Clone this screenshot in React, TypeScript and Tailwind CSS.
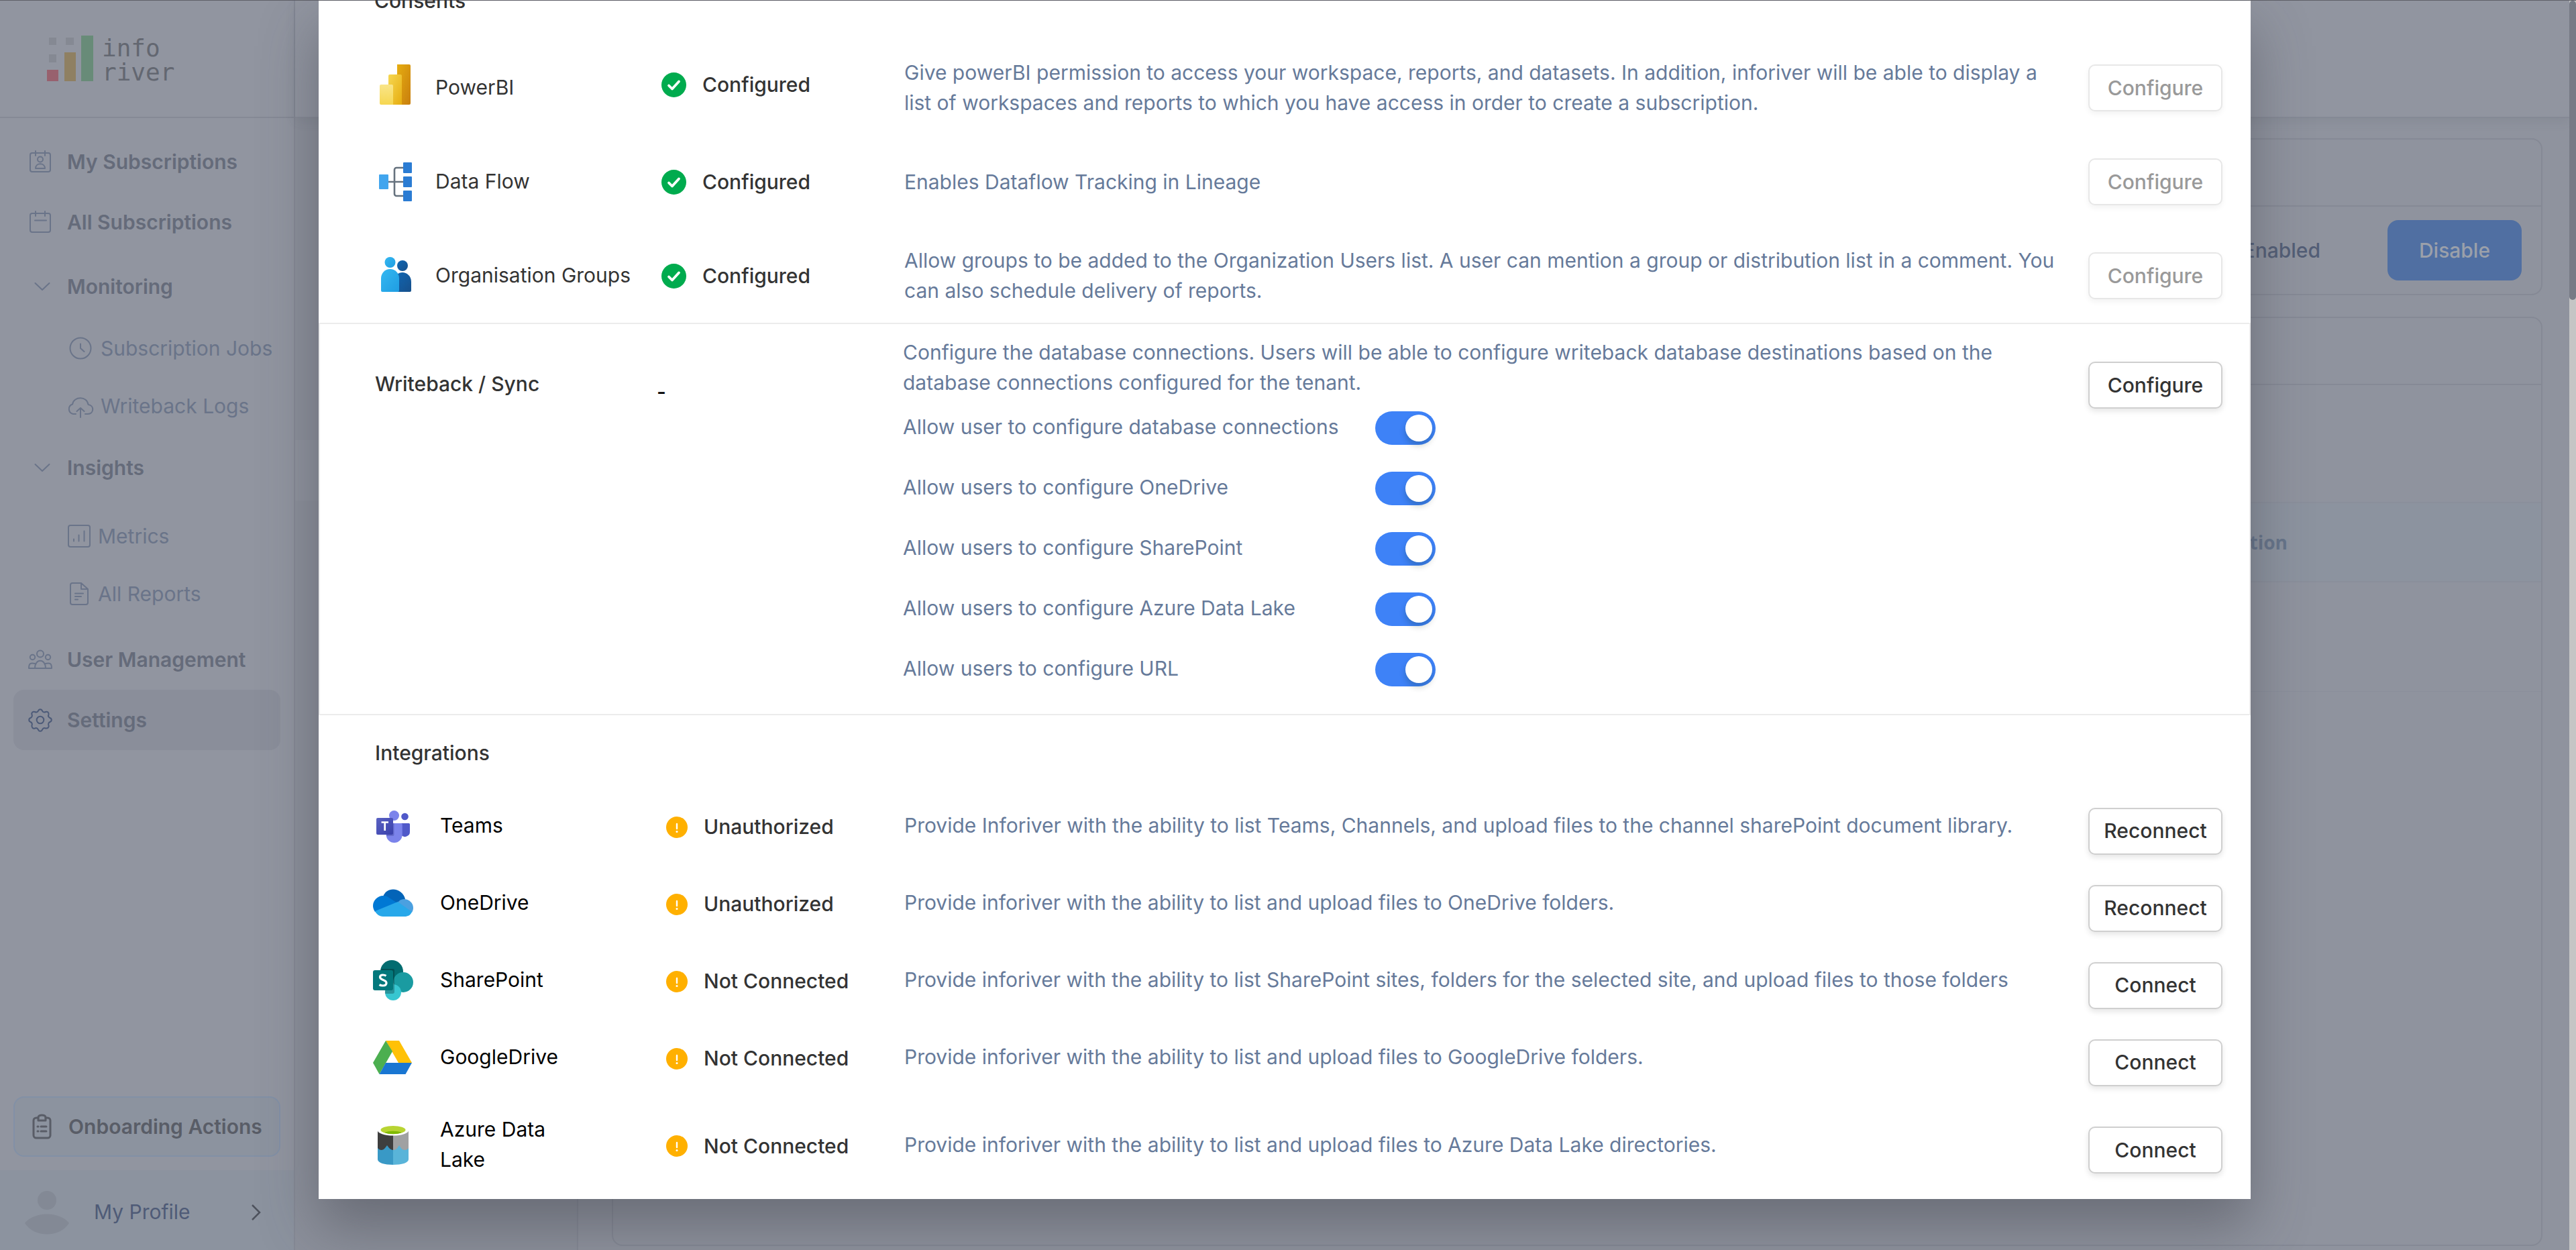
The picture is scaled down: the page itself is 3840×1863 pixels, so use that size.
import React from "react";

type RowData = { name: string; icon: React.ReactNode; status: string; text: string; action: string };

/* ---------- product icons ---------- */

const PowerBIIcon = () => (
  <svg viewBox="0 0 60 60" className="size-15" aria-hidden="true">
    <defs>
      <linearGradient id="pb1" x1="0" y1="0" x2="1" y2="1"><stop offset="0" stopColor="#e6ad10" /><stop offset="1" stopColor="#c87e0e" /></linearGradient>
      <linearGradient id="pb2" x1="0" y1="0" x2="1" y2="1"><stop offset="0" stopColor="#f6d751" /><stop offset="1" stopColor="#e6ad10" /></linearGradient>
      <linearGradient id="pb3" x1="0" y1="0" x2="0" y2="1"><stop offset="0" stopColor="#f9e589" /><stop offset="1" stopColor="#f6d751" /></linearGradient>
    </defs>
    <path d="M32 0h18a2 2 0 0 1 2 2v56a2 2 0 0 1-2 2H32z" fill="url(#pb1)" />
    <path d="M19 17a2 2 0 0 1 2-2h16a2 2 0 0 1 2 2v43H19z" fill="url(#pb2)" />
    <path d="M6 32a2 2 0 0 1 2-2h16a2 2 0 0 1 2 2v28H8a2 2 0 0 1-2-2z" fill="url(#pb3)" />
  </svg>
);

const DataFlowIcon = () => (
  <svg viewBox="0 0 60 60" className="size-15" aria-hidden="true">
    <path d="M18 30h24M42 9H31a3 3 0 0 0-3 3v36a3 3 0 0 0 3 3h11" fill="none" stroke="#66727e" strokeWidth="2.6" />
    <rect x="5" y="19" width="14" height="22" rx="1" fill="#41a5ee" />
    <rect x="41" y="1" width="13" height="16" rx="1" fill="#2b7cd3" />
    <rect x="41" y="22" width="13" height="16" rx="1" fill="#2b7cd3" />
    <rect x="41" y="43" width="13" height="16" rx="1" fill="#2b7cd3" />
  </svg>
);

const GroupsIcon = () => (
  <svg viewBox="0 0 60 60" className="size-15" aria-hidden="true">
    <defs>
      <linearGradient id="g1" x1="0" y1="0" x2="1" y2="1"><stop offset="0" stopColor="#35b8f1" /><stop offset="1" stopColor="#1f9de2" /></linearGradient>
      <linearGradient id="g2" x1="0" y1="0" x2="1" y2="1"><stop offset="0" stopColor="#0f67b4" /><stop offset="1" stopColor="#17508b" /></linearGradient>
    </defs>
    <circle cx="40" cy="15" r="8" fill="url(#g2)" />
    <path d="M28 54V36c0-7 6-11 12-11s13 5 13 14v13a2 2 0 0 1-2 2z" fill="url(#g2)" />
    <circle cx="21.500" cy="10" r="8" fill="url(#g1)" />
    <path d="M8 34c0-8 6-14 13.500-14S35 26 35 34v18a2 2 0 0 1-2 2H10a2 2 0 0 1-2-2z" fill="url(#g1)" />
  </svg>
);

const TeamsIcon = () => (
  <svg viewBox="0 0 60 60" className="size-15" aria-hidden="true">
    <defs><linearGradient id="t1" x1="0" y1="0" x2="1" y2="1"><stop offset="0" stopColor="#5a62c3" /><stop offset="1" stopColor="#3940ab" /></linearGradient></defs>
    <circle cx="47.500" cy="16" r="5.300" fill="#5059c9" />
    <path d="M38 26h15.500A1.500 1.500 0 0 1 55 27.500v10.500a7.500 7.500 0 0 1-13.500 5z" fill="#5059c9" />
    <circle cx="31.500" cy="14.500" r="7.500" fill="#7b83eb" />
    <path d="M20 26h22a1.700 1.700 0 0 1 1.700 1.700V43a12 12 0 0 1-24 0z" fill="#7b83eb" />
    <path d="M20 26h11.500v16.500A2.500 2.500 0 0 1 29 45H20z" fill="#4b52ab" opacity=".5" />
    <rect x="5" y="18" width="25" height="25" rx="2" fill="url(#t1)" />
    <path d="M12.500 24.500h10.500M17.700 24.500v12.500" stroke="#fff" strokeWidth="2.700" />
  </svg>
);

const OneDriveIcon = () => (
  <svg viewBox="0 0 60 60" className="size-15" aria-hidden="true">
    <path d="M15 20C18 13 23 9.500 30 9.500c8 0 16 5.500 18 14.500L38 33z" fill="#0364b8" />
    <path d="M15 19c4 0 7 1 9 3l14 9-9 10L3 43c-2-3-3-6-3-9 0-8 7-15 15-15z" fill="#0078d4" />
    <path d="M46 24c8 0 14 6 14 13 0 3-1 5-2 7L36 30c3-4 6-6 10-6z" fill="#4ba0e0" />
    <path d="M37 28l21 15c-2 5-6 7-11 7H15C9 50 5 46 3 42z" fill="#28a8ea" />
  </svg>
);

const SharePointIcon = () => (
  <svg viewBox="0 0 60 60" className="size-15" aria-hidden="true">
    <circle cx="28" cy="17" r="17" fill="#036c70" />
    <circle cx="45" cy="33" r="15" fill="#1a9ba1" />
    <circle cx="30" cy="48" r="12" fill="#37c6d0" />
    <path d="M12 13h18a2 2 0 0 1 2 2v32a3 3 0 0 1-3 3H18a12 12 0 0 1 0-4z" fill="#000" opacity=".25" />
    <rect x="0" y="15" width="30" height="30" rx="3" fill="#03787c" />
    <path d="M19.500 23.300c-1.500-1-3-1.300-4.700-1.300-2.600 0-4.300 1.300-4.300 3.300 0 5 9.500 3.200 9.500 8.700 0 2.600-2.300 4-5.300 4-1.900 0-3.700-.4-5.200-1.400" fill="none" stroke="#fff" strokeWidth="3.200" />
  </svg>
);

const GoogleDriveIcon = () => (
  <svg viewBox="0 0 60 60" className="size-15" aria-hidden="true">
    <path d="M19 5h20l19 33H38z" fill="#ffc107" />
    <path d="M19 5 0 38l9.500 17L29 21z" fill="#4caf50" />
    <path d="M19 38h39l-9.500 17h-39z" fill="#1976d2" />
  </svg>
);

const DataLakeIcon = () => (
  <svg viewBox="0 0 60 60" className="size-15" aria-hidden="true">
    <path d="M7 9h23v40H7z" fill="#3e3e3e" />
    <path d="M30 9h23v40H30z" fill="#a0a1a2" />
    <path d="M7 35c3 4 8 4 11 0l3-4 3 4c2 2 4 3 6 3v22C17 60 7 57 7 52z" fill="#3999c6" />
    <path d="M30 38c3 0 5-1 7-4l2-3 2 3c3 5 9 5 12 1v17c0 5-10 8-23 8z" fill="#59b4d9" />
    <ellipse cx="30" cy="9" rx="23" ry="7.500" fill="#fff" />
    <ellipse cx="30" cy="8" rx="18.500" ry="6" fill="#b8d432" />
    <path d="M17 12c7-3 19-3 26 0-7 3-19 3-26 0z" fill="#7fba00" />
  </svg>
);

/* ---------- status icons ---------- */

const OkIcon = () => (
  <svg viewBox="0 0 37 37" className="size-[37px] shrink-0" aria-hidden="true">
    <circle cx="18.500" cy="18.500" r="18.500" fill="#00ab4e" />
    <path d="m11 19.500 5 5L26 13.500" fill="none" stroke="#fff" strokeWidth="3.800" strokeLinecap="round" strokeLinejoin="round" />
  </svg>
);

const WarnIcon = () => (
  <svg viewBox="0 0 32 32" className="size-8 shrink-0" aria-hidden="true">
    <circle cx="16" cy="16" r="16" fill="#ffb000" />
    <path d="M16 11v7" stroke="#fff" strokeWidth="2.400" strokeLinecap="round" />
    <circle cx="16" cy="22.500" r="1.500" fill="#fff" />
  </svg>
);

/* ---------- sidebar icons ---------- */

const Line = ({ children, className = "text-[#6a7489]" }: { children: React.ReactNode; className?: string }) => (
  <svg viewBox="0 0 40 40" className={`size-10 shrink-0 ${className}`} fill="none" stroke="currentColor" strokeWidth="2" strokeLinecap="round" strokeLinejoin="round" aria-hidden="true">
    {children}
  </svg>
);

const MySubsIcon = () => (
  <Line>
    <rect x="5" y="7" width="30" height="28" rx="3" />
    <path d="M13 4v7M27 4v7" />
    <circle cx="20" cy="16.500" r="4" />
    <path d="M13 30c0-9 14-9 14 0z" />
  </Line>
);
const AllSubsIcon = () => (
  <Line>
    <rect x="5" y="7" width="30" height="28" rx="3" />
    <path d="M13 4v7M27 4v7M12 17.500h17" />
  </Line>
);
const ChevronIcon = () => <Line><path d="m12.500 15 10.500 10 10.500-10" /></Line>;
const ClockIcon = () => <Line><circle cx="20" cy="20" r="15.500" /><path d="M20 13.500V20l5.500 5" /></Line>;
const CloudIcon = () => (
  <Line>
    <path d="M13 32H9A7.500 7.500 0 0 1 8 17.500C10 5 30 5 31.500 18 41 19 40 32 31 32h-4M20 37V23M14.500 28l5.500-5 5.500 5" />
  </Line>
);
const MetricsIcon = () => <Line><rect x="2" y="4" width="32" height="32" rx="3" /><path d="M10 27.500V24.500M17.500 27.500v-9M25.500 27.500v-15" /></Line>;
const ReportsIcon = () => (
  <Line>
    <path d="M21 4H8a3 3 0 0 0-3 3v26a3 3 0 0 0 3 3h20a3 3 0 0 0 3-3V13zM21 4v9h10M12 19.500h12M12 24h9M12 28.500h4" />
  </Line>
);
const UsersIcon = () => (
  <Line>
    <circle cx="20" cy="11.500" r="5" />
    <circle cx="8.500" cy="16.500" r="3.700" />
    <circle cx="31.500" cy="16.500" r="3.700" />
    <path d="M12 33c0-15 16-15 16 0zM12 33H3c0-8 3-8 9-7M28 33h9c0-8-3-8-9-7" />
  </Line>
);
const GearIcon = () => (
  <Line className="text-[#4c5a78]">
    <circle cx="20" cy="20" r="5.300" />
    <path d="M17 6.500c1-3 5-3 6 0 1 2 3 2.500 5 1.500 3-1 5 1 4.500 4-1 2 0 4 2 5 3 1 3 5 0 6-2 1-3 3-2 5 1 3-1.500 5-4.500 4.500-2-1-4 0-5 2-1 3-5 3-6 0-1-2-3-3-5-2-3 1-5-1.500-4.500-4.500 1-2 0-4-2-5-3-1-3-5 0-6 2-1 3-3 2-5-1-3 1.500-5 4.500-4 2 1 4 .5 5-1.500z" />
  </Line>
);

const Logo = () => (
  <div className="flex h-44 items-center border-b-2 border-[#858995] pl-[70px]" role="img" aria-label="Inforiver">
    <svg viewBox="0 0 70 70" className="size-[70px]" aria-hidden="true">
      <g fill="#858993">
        <rect x="3" y="4" width="11" height="11" />
        <rect x="28" y="4" width="12" height="11" />
        <rect x="3" y="29" width="11" height="12" />
      </g>
      <rect x="0" y="52" width="17" height="17" fill="#98616e" />
      <rect x="26" y="26" width="17" height="43" fill="#8f8062" />
      <rect x="51" y="1" width="18" height="68" fill="#688b78" />
    </svg>
    <div className="flex flex-col pt-1.5 pl-3 font-['DejaVu_Sans_Mono',monospace] text-[36px] leading-9 text-[#636771]">
      <span>info</span>
      <span>river</span>
    </div>
  </div>
);

/* ---------- sidebar ---------- */

const NavItem = ({ icon, label, className = "" }: { icon: React.ReactNode; label: string; className?: string }) => (
  <a href="#" className={`flex h-[90px] items-center gap-5 rounded-2xl pl-5 font-semibold whitespace-nowrap text-[#656b7a] ${className}`}>
    {icon}
    <span>{label}</span>
  </a>
);

const SubItem = ({ icon, label, className = "gap-2.5" }: { icon: React.ReactNode; label: string; className?: string }) => (
  <a href="#" className={`flex h-[86px] items-center pl-20 whitespace-nowrap text-[#6a7489] ${className}`}>
    {icon}
    <span>{label}</span>
  </a>
);

const Sidebar = () => (
  <aside className="flex w-[440px] shrink-0 flex-col border-r-2 border-[#858995] bg-[#9195a0]">
    <Logo />
    <nav className="flex flex-1 flex-col px-5 pt-5 text-[30px]">
      <NavItem icon={<MySubsIcon />} label="My Subscriptions" />
      <NavItem icon={<AllSubsIcon />} label="All Subscriptions" />
      <NavItem icon={<ChevronIcon />} label="Monitoring" className="mt-1.5" />
      <SubItem icon={<ClockIcon />} label="Subscription Jobs" className="mt-1 gap-2.5" />
      <SubItem icon={<CloudIcon />} label="Writeback Logs" />
      <NavItem icon={<ChevronIcon />} label="Insights" className="mt-1" />
      <SubItem icon={<MetricsIcon />} label="Metrics" className="mt-3.5 gap-1.5" />
      <SubItem icon={<ReportsIcon />} label="All Reports" className="gap-1.5" />
      <NavItem icon={<UsersIcon />} label="User Management" className="mt-2.5" />
      <NavItem icon={<GearIcon />} label="Settings" className="bg-[#8a8e9a]" />
    </nav>
    <button type="button" className="mx-5 mb-5 flex h-[90px] items-center gap-5 rounded-2xl border-2 border-[#8290a6] bg-[#8c939f] pl-5 text-[30px] font-semibold whitespace-nowrap text-[#595d67]">
      <Line className="text-[#595d67]">
        <path d="M15 7h-3a4 4 0 0 0-4 4v22a4 4 0 0 0 4 4h17a4 4 0 0 0 4-4V11a4 4 0 0 0-4-4h-3" strokeWidth="3" />
        <path d="M15 6c1-4 10-4 11 0v5H15zM14 20h1M19 20h8M14 27h1M19 27h8" strokeWidth="3" />
      </Line>
      <span>Onboarding Actions</span>
    </button>
    <button type="button" className="flex h-[119px] items-center bg-[#8c939f] pt-1.5 pl-9 text-left text-[30px] text-[#4f5b77]">
      <svg viewBox="0 0 68 68" className="size-[68px]" fill="#838995" aria-hidden="true">
        <circle cx="34" cy="16" r="14" />
        <path d="M1 50c14-18 52-18 66 0-14 22-52 22-66 0z" />
      </svg>
      <span className="flex-1 pl-9">My Profile</span>
      <svg viewBox="0 0 16 26" className="mr-12 h-[26px] w-4" fill="none" stroke="#4e525d" strokeWidth="2.500" aria-hidden="true">
        <path d="m2 2 11 11L2 24" />
      </svg>
    </button>
  </aside>
);

/* ---------- page behind the dialog ---------- */

const Page = () => (
  <div className="flex min-w-0 flex-1 flex-col bg-[#8f939e]">
    <header className="z-10 h-44 border-b-2 border-[#858995] bg-[#9195a0] shadow-[0_6px_14px_rgba(70,75,90,0.10)]" />
    <div className="flex flex-1">
      <div className="w-[422px] border-r-2 border-[#858995] bg-[#8c909b] pt-[480px]">
        <div className="h-[90px] bg-[#8f939e]" />
      </div>
      <main className="flex flex-1 flex-col gap-8 pt-[30px] pr-10 pb-1.5 pl-[50px] text-[30px]">
        <section className="rounded-2xl border-2 border-[#858995]">
          <div className="h-[100px] border-b-2 border-[#858995]" />
          <div className="flex h-[130px] items-center justify-end gap-[100px] pr-[29px]">
            <span className="font-medium text-[#535e76]">Enabled</span>
            <button type="button" className="h-[90px] w-[200px] rounded-2xl bg-[#506fa2] font-medium text-[#9ba0aa]">Disable</button>
          </div>
        </section>
        <section className="flex-1 rounded-2xl border-2 border-[#858995]">
          <div className="h-[100px] border-b-2 border-[#858995]" />
          <div className="h-[174px]" />
          <table className="w-full">
            <thead>
              <tr className="h-[118px] border-y-2 border-[#8a8f9b] bg-[#8c939f]">
                <th className="pr-[378px] text-right font-['Open_Sans',sans-serif] text-[28px] font-bold text-[#66748a]">Action</th>
              </tr>
            </thead>
            <tbody>
              <tr className="h-[163px] border-b border-[#8a8f9b]"><td /></tr>
            </tbody>
          </table>
        </section>
      </main>
    </div>
  </div>
);

/* ---------- dialog ---------- */

const consents: RowData[] = [
  { name: "PowerBI", icon: <PowerBIIcon />, status: "Configured", text: "Give powerBI permission to access your workspace, reports, and datasets. In addition, inforiver will be able to display a list of workspaces and reports to which you have access in order to create a subscription.", action: "Configure" },
  { name: "Data Flow", icon: <DataFlowIcon />, status: "Configured", text: "Enables Dataflow Tracking in Lineage", action: "Configure" },
  { name: "Organisation Groups", icon: <GroupsIcon />, status: "Configured", text: "Allow groups to be added to the Organization Users list. A user can mention a group or distribution list in a comment. You can also schedule delivery of reports.", action: "Configure" },
];

const toggles = [
  "Allow user to configure database connections",
  "Allow users to configure OneDrive",
  "Allow users to configure SharePoint",
  "Allow users to configure Azure Data Lake",
  "Allow users to configure URL",
];

const integrations: RowData[] = [
  { name: "Teams", icon: <TeamsIcon />, status: "Unauthorized", text: "Provide Inforiver with the ability to list Teams, Channels, and upload files to the channel sharePoint document library.", action: "Reconnect" },
  { name: "OneDrive", icon: <OneDriveIcon />, status: "Unauthorized", text: "Provide inforiver with the ability to list and upload files to OneDrive folders.", action: "Reconnect" },
  { name: "SharePoint", icon: <SharePointIcon />, status: "Not Connected", text: "Provide inforiver with the ability to list SharePoint sites, folders for the selected site, and upload files to those folders", action: "Connect" },
  { name: "GoogleDrive", icon: <GoogleDriveIcon />, status: "Not Connected", text: "Provide inforiver with the ability to list and upload files to GoogleDrive folders.", action: "Connect" },
  { name: "Azure Data Lake", icon: <DataLakeIcon />, status: "Not Connected", text: "Provide inforiver with the ability to list and upload files to Azure Data Lake directories.", action: "Connect" },
];

const ActionButton = ({ label, disabled = false }: { label: string; disabled?: boolean }) => (
  <button
    type="button"
    disabled={disabled}
    className="h-[70px] w-[200px] rounded-[10px] border-2 border-[#cfcfcf] bg-white font-medium text-[#333] shadow-[0_4px_8px_rgba(0,0,0,0.10)] disabled:border-[#e7e7e7] disabled:text-[#999] disabled:shadow-[0_4px_8px_rgba(0,0,0,0.05)]"
  >
    {label}
  </button>
);

const Toggle = ({ label }: { label: string }) => (
  <label className="flex h-[90px] items-center">
    <span className="w-[704px] pb-1">{label}</span>
    <input
      type="checkbox"
      role="switch"
      defaultChecked
      className="flex h-[50px] w-[90px] appearance-none items-center rounded-full bg-gray-300 px-[5px] before:size-10 before:rounded-full before:bg-white before:shadow-[0_6px_10px_rgba(0,35,11,0.2)] checked:justify-end checked:bg-[#3e82f7]"
    />
  </label>
);

const Dialog = () => (
  <div role="dialog" aria-label="Connections" className="w-[2880px] bg-white text-[30px] leading-[45px] text-[#333] shadow-[0_40px_80px_rgba(60,62,72,0.45)]">
    <h2 className="-mt-[22px] h-[82px] pl-[83px] font-medium">Consents</h2>
    {consents.map((r) => (
      <div key={r.name} className="group grid h-[140px] grid-cols-[89px_337px_362px_1fr_200px] items-center pr-[42px] pl-[85px]">
        <span className="group-first-of-type:pb-2.5">{r.icon}</span>
        <span className="pb-0.5">{r.name}</span>
        <span className="flex items-center gap-6 font-medium group-first-of-type:pb-2.5"><OkIcon />{r.status}</span>
        <p className="pr-12 text-[#667a9a]">{r.text}</p>
        <ActionButton label={r.action} disabled />
      </div>
    ))}
    <section className="grid grid-cols-[420px_367px_1fr_200px] border-2 border-[#ececec] pt-5 pr-10 pb-[21px] pl-[82px]">
      <h2 className="pt-[47px] font-medium">Writeback / Sync</h2>
      <span className="pt-[59px] font-medium text-black">-</span>
      <div className="pr-12 text-[#667a9a]">
        <p>Configure the database connections. Users will be able to configure writeback database destinations based on the database connections configured for the tenant.</p>
        {toggles.map((t) => (
          <Toggle key={t} label={t} />
        ))}
      </div>
      <div className="pt-9"><ActionButton label="Configure" /></div>
    </section>
    <section className="pb-2">
      <h2 className="h-[107px] pt-[34px] pl-[84px] font-medium">Integrations</h2>
      {integrations.map((r) => (
        <div key={r.name} className="grid min-h-[115px] grid-cols-[100px_337px_355px_1fr_200px] items-center pr-[42px] pl-[81px] last:min-h-[146px]">
          {r.icon}
          <span className="max-w-[200px] text-black">{r.name}</span>
          <span className="flex items-center gap-6 pt-1 font-medium"><WarnIcon />{r.status}</span>
          <p className="pr-10 text-[#667a9a]">{r.text}</p>
          <div className="pt-4"><ActionButton label={r.action} /></div>
        </div>
      ))}
    </section>
  </div>
);

export default function App() {
  return (
    <div className="relative flex min-h-screen overflow-hidden bg-[#9195a0] pr-2.5 font-['Inter',sans-serif]">
      <Sidebar />
      <Page />
      <div className="absolute inset-0 z-20 flex border-t border-[#5f6068]">
        <div className="flex flex-1 items-start justify-center"><Dialog /></div>
        <div className="w-2.5 bg-[#c5c5c5]">
          <div className="h-[446px] rounded-full bg-[#777b86]" />
        </div>
      </div>
    </div>
  );
}
